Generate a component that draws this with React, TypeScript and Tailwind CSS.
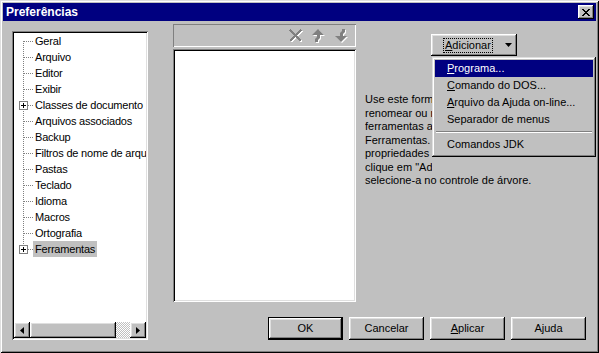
import React from "react";

const raised =
  "shadow-[inset_-1px_-1px_#000,inset_1px_1px_#fff,inset_-2px_-2px_#808080,inset_2px_2px_#dfdfdf]";
const sunken =
  "shadow-[inset_1px_1px_#808080,inset_-1px_-1px_#fff,inset_2px_2px_#000,inset_-2px_-2px_#dfdfdf]";

type Item = { label: string; plus?: boolean; selected?: boolean };

const items: Item[] = [
  { label: "Geral" },
  { label: "Arquivo" },
  { label: "Editor" },
  { label: "Exibir" },
  { label: "Classes de documento", plus: true },
  { label: "Arquivos associados" },
  { label: "Backup" },
  { label: "Filtros de nome de arquivo" },
  { label: "Pastas" },
  { label: "Teclado" },
  { label: "Idioma" },
  { label: "Macros" },
  { label: "Ortografia" },
  { label: "Ferramentas", plus: true, selected: true },
];

function Connector({ first, last, plus }: { first: boolean; last: boolean; plus?: boolean }) {
  return (
    <svg width="19" height="16" className="shrink-0" shapeRendering="crispEdges">
      <line
        x1="9.5"
        x2="9.5"
        y1={first ? 8 : 0}
        y2={last ? 9 : 16}
        stroke="#808080"
        strokeDasharray="1 1"
      />
      <line x1="10" x2="19" y1="8.5" y2="8.5" stroke="#808080" strokeDasharray="1 1" />
      {plus && (
        <g>
          <rect x="5.5" y="4.5" width="8" height="8" fill="#fff" stroke="#808080" />
          <line x1="7" x2="12" y1="8.5" y2="8.5" stroke="#000" />
          <line x1="9.5" x2="9.5" y1="6" y2="11" stroke="#000" />
        </g>
      )}
    </svg>
  );
}

function Tree() {
  return (
    <div className={`w-[136px] h-[309px] mt-[7px] bg-white p-[2px] flex flex-col shrink-0 ${sunken}`}>
      <div className="flex-1 overflow-hidden">
        {items.map((it, i) => (
          <div key={it.label} className="h-[16px] flex items-center whitespace-nowrap">
            <Connector first={i === 0} last={i === items.length - 1} plus={it.plus} />
            <span
              className={`px-[2px] leading-[16px] tracking-[-0.2px] ${it.selected ? "bg-[#c0c0c0]" : ""}`}
            >
              {it.label}
            </span>
          </div>
        ))}
      </div>
      <div className="h-[16px] flex shrink-0">
        <div className={`w-[16px] h-[16px] bg-[#c0c0c0] flex items-center justify-center ${raised}`}>
          <svg width="4" height="7">
            <polygon points="4,0 0,3.5 4,7" fill="#000" />
          </svg>
        </div>
        <div className={`w-[86px] h-[16px] bg-[#c0c0c0] ${raised}`} />
        <div className="w-[14px] h-[16px] bg-[repeating-conic-gradient(#c0c0c0_0_25%,#fff_0_50%)] [background-size:2px_2px]" />
        <div className={`w-[16px] h-[16px] bg-[#c0c0c0] flex items-center justify-center ${raised}`}>
          <svg width="4" height="7">
            <polygon points="0,0 4,3.5 0,7" fill="#000" />
          </svg>
        </div>
      </div>
    </div>
  );
}

function DisabledX() {
  return (
    <svg width="14" height="14" shapeRendering="crispEdges">
      <g stroke="#fff" strokeWidth="1.6">
        <line x1="2" y1="2" x2="13" y2="13" />
        <line x1="13" y1="2" x2="2" y2="13" />
      </g>
      <g stroke="#808080" strokeWidth="1.6">
        <line x1="1" y1="1" x2="12" y2="12" />
        <line x1="12" y1="1" x2="1" y2="12" />
      </g>
    </svg>
  );
}

function UpArrow() {
  const pts = "6,0 12,6 8,6 8,9 6,11 6,13 3,13 3,10 5,8 5,6 0,6";
  return (
    <svg width="14" height="14">
      <polygon points={pts} transform="translate(1,1)" fill="#fff" />
      <polygon points={pts} fill="#808080" />
    </svg>
  );
}

function DownArrow() {
  const pts = "6,13 12,7 8,7 8,5 10,3 10,0 7,0 7,2 5,4 5,7 0,7";
  return (
    <svg width="14" height="14">
      <polygon points={pts} transform="translate(1,1)" fill="#fff" />
      <polygon points={pts} fill="#808080" />
    </svg>
  );
}

function Middle() {
  return (
    <div className="w-[183px] flex flex-col shrink-0">
      <div className="h-[23px] border-t border-l border-[#808080] shadow-[inset_-1px_-1px_#fff] flex items-center justify-end gap-[9px] pr-[7px]">
        <DisabledX />
        <UpArrow />
        <DownArrow />
      </div>
      <div className={`mt-[2px] h-[253px] bg-white ${sunken}`} />
    </div>
  );
}

function Menu() {
  const item = "h-[17px] mx-[1px] pl-[12px] flex items-center whitespace-nowrap";
  return (
    <div className="absolute left-[76px] top-[33px] w-[164px] h-[100px] bg-[#c0c0c0] pt-[3px] px-[2px] shadow-[inset_-1px_-1px_#000,inset_1px_1px_#dfdfdf,inset_-2px_-2px_#808080,inset_2px_2px_#fff]">
      <div className={`${item} bg-[#000080] text-white`}>
        <span>
          <u>P</u>rograma...
        </span>
      </div>
      <div className={item}>
        <span>
          <u>C</u>omando do DOS...
        </span>
      </div>
      <div className={item}>
        <span>
          <u>A</u>rquivo da Ajuda on-line...
        </span>
      </div>
      <div className={item}>Separador de menus</div>
      <div className="h-[8px] flex flex-col justify-center mx-[2px]">
        <div className="h-[1px] bg-[#808080]" />
        <div className="h-[1px] bg-white" />
      </div>
      <div className={item}>Comandos JDK</div>
    </div>
  );
}

function RightPanel() {
  return (
    <div className="flex-1 relative">
      <div className={`ml-[75px] mt-[10px] w-[86px] h-[22px] bg-[#c0c0c0] flex items-center pl-[12px] ${raised}`}>
        <span className="border border-dotted border-black px-[1px] leading-[13px]">
          <u>A</u>dicionar
        </span>
        <svg width="7" height="4" className="ml-[12px]">
          <polygon points="0,0 7,0 3.5,4" fill="#000" />
        </svg>
      </div>
      <div className="ml-[9px] mt-[37px] leading-[13.5px] whitespace-nowrap">
        <div className="w-[67px] overflow-hidden">
          <div>Use este formulário para adicionar,</div>
          <div>renomear ou remover itens do menu</div>
          <div>ferramentas a partir do menu</div>
          <div>Ferramentas. Para alterar as</div>
          <div>propriedades de uma ferramenta,</div>
          <div>clique em "Adicionar" ou</div>
        </div>
        <div>selecione-a no controle de árvore.</div>
      </div>
      <Menu />
    </div>
  );
}

function Btn({ children, def }: { children: React.ReactNode; def?: boolean }) {
  return (
    <div
      className={`w-[75px] h-[23px] bg-[#c0c0c0] flex items-center justify-center ${
        def
          ? "shadow-[inset_0_0_0_1px_#000,inset_-2px_-2px_#000,inset_2px_2px_#fff,inset_-3px_-3px_#808080,inset_3px_3px_#dfdfdf]"
          : raised
      }`}
    >
      {children}
    </div>
  );
}

export default function App() {
  return (
    <div className="w-[599px] h-[353px] bg-[#c0c0c0] p-[3px] flex flex-col text-[11px] text-black font-['Liberation_Sans',Arial,sans-serif] shadow-[inset_1px_1px_#dfdfdf,inset_-1px_-1px_#000,inset_2px_2px_#fff,inset_-2px_-2px_#808080] overflow-hidden">
      <div className="h-[18px] bg-[#000080] flex items-center justify-between pl-[3px] pr-[2px] shrink-0">
        <span className="text-white font-bold text-[12px]">Preferências</span>
        <div className={`w-[16px] h-[14px] bg-[#c0c0c0] flex items-center justify-center ${raised}`}>
          <svg width="8" height="7" shapeRendering="crispEdges">
            <path
              d="M0 0h2v1h1v1h2v-1h1v-1h2v1h-1v1h-1v1h-1v1h1v1h1v1h1v1h-2v-1h-1v-1h-2v1h-1v1h-2v-1h1v-1h1v-1h1v-1h-1v-1h-1v-1h-1z"
              fill="#000"
            />
          </svg>
        </div>
      </div>
      <div className="flex-1 flex pt-[3px] pl-[9px]">
        <Tree />
        <div className="flex-1 flex flex-col ml-[25px]">
          <div className="flex h-[278px]">
            <Middle />
            <RightPanel />
          </div>
          <div className="flex justify-end gap-[6px] pr-[10px] mt-[15px]">
            <Btn def>OK</Btn>
            <Btn>Cancelar</Btn>
            <Btn>
              <span>
                <u>A</u>plicar
              </span>
            </Btn>
            <Btn>Ajuda</Btn>
          </div>
        </div>
      </div>
    </div>
  );
}
